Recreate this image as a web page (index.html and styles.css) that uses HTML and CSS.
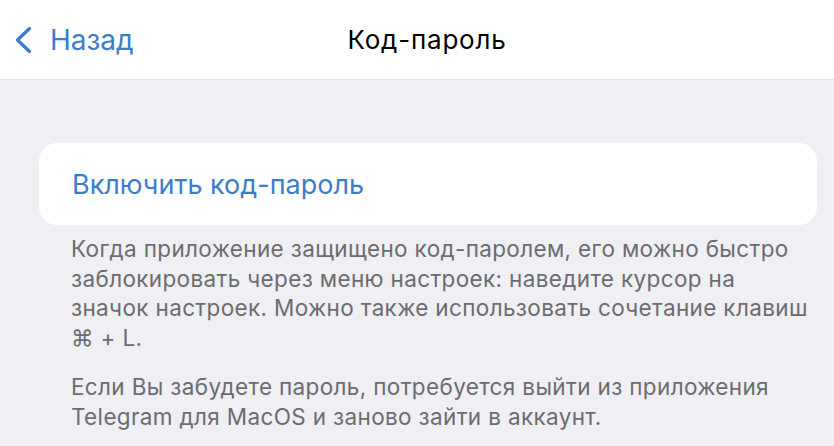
FILE: index.html
```html
<!DOCTYPE html>
<html lang="ru">
<head>
<meta charset="utf-8">
<link rel="stylesheet" href="styles.css">
</head>
<body>
<header class="nav">
  <a class="back">
    <svg class="chev" width="18" height="28" viewBox="0 0 18 28"><path d="M15.5 2.5 L3.5 14 L15.5 25.5" fill="none" stroke="#3b7dcd" stroke-width="3.2" stroke-linecap="round" stroke-linejoin="round"/></svg>
    <span class="back-label">Назад</span>
  </a>
  <h1 class="title">Код-пароль</h1>
  <span class="spacer"></span>
</header>
<main class="content">
  <div class="card">
    <span class="action">Включить код-пароль</span>
  </div>
  <p class="note">Когда приложение защищено код-паролем, его можно быстро<br>заблокировать через меню настроек: наведите курсор на<br>значок настроек. Можно также использовать сочетание клавиш<br>⌘ + L.</p>
  <p class="note">Если Вы забудете пароль, потребуется выйти из приложения<br>Telegram для MacOS и заново зайти в аккаунт.</p>
</main>
</body>
</html>
```
FILE: styles.css
```css
html, body {
  margin: 0;
  padding: 0;
  background: #efeff4;
  font-family: "Inter", "Liberation Sans", sans-serif;
  width: 834px;
  height: 446px;
  overflow: hidden;
}
.nav {
  height: 80px;
  background: #ffffff;
  border-bottom: 1px solid #e6e6e9;
  box-sizing: border-box;
  display: grid;
  grid-template-columns: 1fr auto 1fr;
  align-items: center;
}
.back {
  display: flex;
  align-items: center;
  padding-left: 14px;
  color: #3b7dcd;
  font-size: 28px;
  gap: 18px;
}
.chev { display: block; }
.title {
  margin: 0;
  font-size: 26px;
  letter-spacing: 0.8px;
  font-weight: 400;
  color: #000;
  padding-left: 20px;
}
.content {
  padding: 63px 17px 0 39px;
}
.card {
  background: #fff;
  border-radius: 18px;
  height: 82px;
  display: flex;
  align-items: center;
  padding-left: 33px;
}
.action {
  color: #3b7dcd;
  font-size: 27px;
}
.note {
  margin: 9px 0 0 32px;
  color: #6c6c70;
  font-size: 22.5px;
  letter-spacing: 0.35px;
  line-height: 29.5px;
  white-space: nowrap;
}
.note + .note {
  margin-top: 20px;
}
```
